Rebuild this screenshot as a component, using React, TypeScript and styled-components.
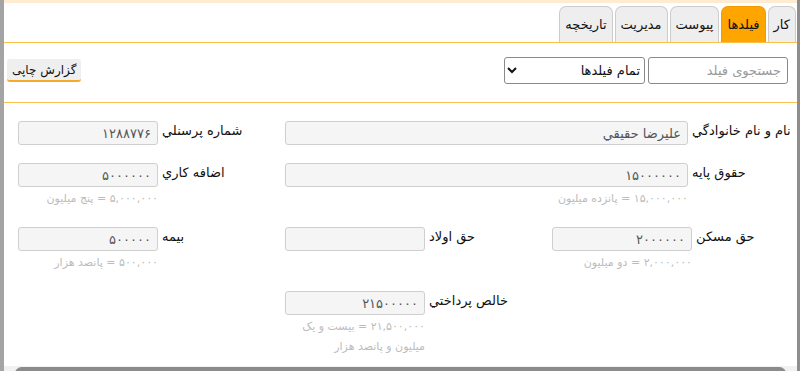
import React from 'react';
import styled, { createGlobalStyle } from 'styled-components';

const GlobalStyle = createGlobalStyle`
  html, body {
    margin: 0;
    padding: 0;
    overflow: hidden;
    background: #fff;
  }
  body {
    font-family: 'DejaVu Sans', 'Noto Sans', sans-serif;
  }
`;

const Frame = styled.div`
  direction: rtl;
  height: 371px;
  display: flex;
  flex-direction: column;
  border-left: 4px solid #a4a4a4;
  border-right: 3px solid #8e8e8e;
  box-sizing: border-box;
  background: #fff;
`;

const TopStrip = styled.div`
  height: 3px;
  background: #fdebd2;
`;

const TabBar = styled.div`
  display: flex;
  gap: 2px;
  padding: 3px 1px 0 0;
  height: 36px;
  border-bottom: 1px solid #fcbf4a;
`;

const Tab = styled.div<{ $active?: boolean }>`
  display: flex;
  align-items: center;
  padding: 0 5px;
  height: 36px;
  box-sizing: border-box;
  font-size: 13px;
  color: #111;
  background: ${(p) => (p.$active ? '#ffa500' : '#eeeeee')};
  border: 1px solid ${(p) => (p.$active ? '#f29b00' : '#cccccc')};
  border-bottom: none;
  border-radius: 7px 7px 0 0;
`;

const Toolbar = styled.div`
  display: flex;
  align-items: center;
  gap: 3px;
  padding: 14px 9px 18px 3px;
  border-bottom: 1px solid #fcc24d;
`;

const SearchInput = styled.input`
  width: 140px;
  height: 27px;
  box-sizing: border-box;
  border: 1px solid #8a8a8a;
  border-radius: 3px;
  padding: 0 6px;
  font-family: inherit;
  font-size: 13px;
  direction: rtl;
  &::placeholder {
    color: #9a9a9a;
  }
`;

const FieldSelect = styled.select`
  width: 141px;
  height: 27px;
  box-sizing: border-box;
  border: 1px solid #8a8a8a;
  border-radius: 3px;
  background: #fff;
  font-family: inherit;
  font-size: 13px;
  color: #111;
  direction: rtl;
`;

const PrintButton = styled.button`
  margin-right: auto;
  height: 23px;
  padding: 0 5px;
  border: none;
  border-bottom: 2px solid #f7a928;
  border-radius: 3px;
  background: #efefef;
  font-family: inherit;
  font-size: 12px;
  color: #111;
`;

const FormGrid = styled.div`
  flex: 1;
  display: grid;
  grid-template-columns: 1fr 267px 267px;
  align-content: start;
  row-gap: 18px;
  padding: 18px 4px 0 14px;
`;

const Field = styled.div<{ $col: string }>`
  grid-column: ${(p) => p.$col};
  display: flex;
  justify-content: flex-end;
  align-items: flex-start;
  gap: 4px;
`;

const InputStack = styled.div`
  display: flex;
  flex-direction: column;
`;

const ValueBox = styled.input<{ $w: number }>`
  width: ${(p) => p.$w}px;
  height: 24px;
  box-sizing: border-box;
  border: 1px solid #cfcfcf;
  border-radius: 3px;
  background: #f5f5f5;
  padding: 0 6px;
  font-family: inherit;
  font-size: 13px;
  color: #555;
  direction: rtl;
`;

const Hint = styled.div<{ $w: number }>`
  width: ${(p) => p.$w}px;
  margin-top: 2px;
  font-size: 11px;
  line-height: 20px;
  color: #bcbcbc;
  text-align: right;
`;

const Label = styled.label`
  font-size: 13px;
  line-height: 20px;
  color: #111;
  white-space: nowrap;
`;

const ScrollTrack = styled.div`
  direction: ltr;
  height: 15px;
  flex: 0 0 15px;
  margin-bottom: -10px;
  display: flex;
  align-items: stretch;
  background: #f1f1f1;
`;

const ScrollArrow = styled.div<{ $dir: 'left' | 'right' }>`
  width: 11px;
  display: flex;
  justify-content: center;
  align-items: center;
  &::before {
    content: '';
    width: 0;
    height: 0;
    border-top: 3px solid transparent;
    border-bottom: 3px solid transparent;
    ${(p) =>
      p.$dir === 'left'
        ? 'border-right: 4px solid #505050;'
        : 'border-left: 4px solid #505050;'}
  }
`;

const ScrollThumb = styled.div`
  flex: 1;
  margin: 1px 0;
  border-radius: 7px;
  background: #8b8b8b;
`;

interface FieldDef {
  label: string;
  value: string;
  col: string;
  width: number;
  hint?: string;
}

const fields: FieldDef[] = [
  { label: 'نام و نام خانوادگي', value: 'عليرضا حقيقي', col: '1 / span 2', width: 403 },
  { label: 'شماره پرسنلي', value: '۱۲۸۸۷۷۶', col: '3', width: 140 },
  { label: 'حقوق پایه', value: '۱۵۰۰۰۰۰۰', col: '1 / span 2', width: 403, hint: '۱۵,۰۰۰,۰۰۰ = پانزده میلیون' },
  { label: 'اضافه کاري', value: '۵۰۰۰۰۰۰', col: '3', width: 140, hint: '۵,۰۰۰,۰۰۰ = پنج میلیون' },
  { label: 'حق مسکن', value: '۲۰۰۰۰۰۰', col: '1', width: 140, hint: '۲,۰۰۰,۰۰۰ = دو میلیون' },
  { label: 'حق اولاد', value: '', col: '2', width: 140 },
  { label: 'بیمه', value: '۵۰۰۰۰۰', col: '3', width: 140, hint: '۵۰۰,۰۰۰ = پانصد هزار' },
  { label: 'خالص پرداختي', value: '۲۱۵۰۰۰۰۰', col: '2', width: 140, hint: '۲۱,۵۰۰,۰۰۰ = بیست و یک میلیون و پانصد هزار' },
];

const tabs = ['کار', 'فیلدها', 'پیوست', 'مدیریت', 'تاریخچه'];

export default function App() {
  return (
    <>
      <GlobalStyle />
      <Frame>
        <TopStrip />
        <TabBar>
          {tabs.map((t) => (
            <Tab key={t} $active={t === 'فیلدها'}>
              {t}
            </Tab>
          ))}
        </TabBar>
        <Toolbar>
          <SearchInput placeholder="جستجوی فیلد" />
          <FieldSelect defaultValue="all">
            <option value="all">تمام فیلدها</option>
          </FieldSelect>
          <PrintButton>گزارش چاپی</PrintButton>
        </Toolbar>
        <FormGrid>
          {fields.map((f) => (
            <Field key={f.label} $col={f.col}>
              <Label>{f.label}</Label>
              <InputStack>
                <ValueBox $w={f.width} value={f.value} readOnly />
                {f.hint && <Hint $w={f.width}>{f.hint}</Hint>}
              </InputStack>
            </Field>
          ))}
        </FormGrid>
        <ScrollTrack>
          <ScrollArrow $dir="left" />
          <ScrollThumb />
          <ScrollArrow $dir="right" />
        </ScrollTrack>
      </Frame>
    </>
  );
}
